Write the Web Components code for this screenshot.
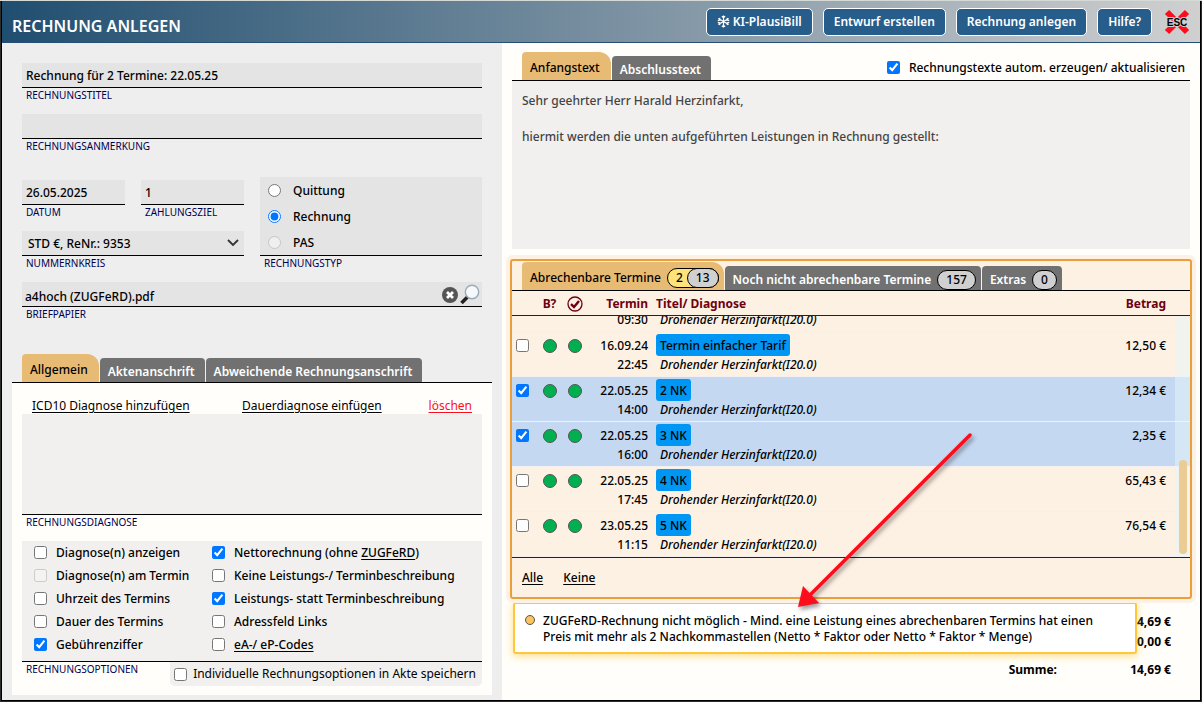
<!DOCTYPE html>
<html lang="de">
<head>
<meta charset="utf-8">
<title>Rechnung anlegen</title>
<style>
body { margin: 0; background: #2c2c2c; font: 500 12px/18px "Noto Sans", sans-serif; color: #000; }
</style>
</head>
<body>
<invoice-app></invoice-app>

<script>
const base = `<style>
  :host { display: block; box-sizing: border-box; }
  *, *::before, *::after { box-sizing: border-box; }
  button, input, select, textarea { font: inherit; color: inherit; margin: 0; }
  input[type=checkbox], input[type=radio] { width: 13px; height: 13px; flex: none; }
  a { color: inherit; text-underline-offset: 2px; }
</style>`;

function define(name, html, setup) {
  customElements.define(name, class extends HTMLElement {
    connectedCallback() {
      if (this.shadowRoot) return;
      this.attachShadow({ mode: 'open' }).innerHTML = base + (typeof html === 'function' ? html(this) : html);
      if (setup) setup(this, this.shadowRoot);
    }
  });
}

/* Button of the title bar */
define('bar-button', `<style>
  button { display: flex; align-items: center; gap: 3px; height: 28px; padding: 0 10px; border: 1px solid #fff; border-radius: 5px;
    background: #275d8b; color: #fff; font-size: 12px; font-weight: 600; white-space: nowrap; }
</style><button type="button"><slot></slot></button>`);

/* Title bar */
define('title-bar', `<style>
  :host { display: flex; align-items: center; gap: 10px; height: 42px; padding: 0 10px;
    border-bottom: 1px solid #264f77; background: linear-gradient(90deg, #204e70, #d0d0d0); }
  h1 { flex: 1; margin: 0; padding-top: 8px; font-size: 16px; line-height: 24px; font-weight: 600; color: #fff; }
  .esc { padding: 0; border: 0; background: none; width: 26px; height: 26px; margin-left: 2px; }
  svg { display: block; }
</style>
<h1>RECHNUNG ANLEGEN</h1>
<bar-button><svg width="13" height="13" viewBox="0 0 13 13" fill="none" stroke="#fff" stroke-width="1.2"><path d="M6.500 .5v12M1.300 3.500l10.400 6M11.700 3.500l-10.400 6M4.900 1.300l1.600 1.500 1.600-1.500M4.900 11.700l1.600-1.500 1.600 1.500M.8 5.600l2.200-.5L2.600 2.800M12.200 7.400l-2.200.5.4 2.300M12.200 5.600l-2.200-.5.4-2.300M.8 7.400l2.200.5-.4 2.300"/></svg>KI-PlausiBill</bar-button>
<bar-button>Entwurf erstellen</bar-button>
<bar-button>Rechnung anlegen</bar-button>
<bar-button>Hilfe?</bar-button>
<button class="esc" type="button" aria-label="Schließen">
  <svg width="26" height="26" viewBox="0 0 26 26"><path d="M3 3l20 20M23 3L3 23" stroke="#fb0d1b" stroke-width="6"/>
  <text x="13" y="17" text-anchor="middle" font-family="Liberation Sans" font-size="10" font-weight="700" stroke="#d0d0d0" stroke-width="2" paint-order="stroke">ESC</text></svg>
</button>`);

/* Control with an underline and a caption below it */
define('form-field', host => `<style>
  :host { padding-bottom: 12px; min-width: 0; }
  .box { min-height: 25px; border-bottom: 1px solid #000; background: #e4e4e4; display: flex; align-items: center; }
  input, select { flex: 1; min-width: 0; width: 100%; height: 24px; border: 0; background: none; padding: 0 4px; outline: 0; }
  select { appearance: none; padding: 2px 6px 0; }
  :host([low]) input { padding: 4px 4px 0 3px; }
  :host([low]) .box { padding-right: 1px; }
  .chev { flex: none; margin-right: 5px; pointer-events: none; }
  .caption { display: block; padding-left: 4px; font-size: 10px; line-height: 14px; font-weight: 400; color: #000050; }
</style>
<div class="box">${host.hasAttribute('select')
  ? `<select id="c"><option>${host.getAttribute('value')}</option></select><svg class="chev" width="12" height="12" viewBox="0 0 12 12" fill="none" stroke="#333" stroke-width="1.8"><path d="M1 3l5 5 5-5"/></svg>`
  : `<input id="c" type="text" value="${host.getAttribute('value') || ''}">`}<slot></slot></div>
<label class="caption" for="c">${host.getAttribute('caption')}</label>`);

/* Choice of the invoice type */
define('type-group', `<style>
  fieldset { margin: 0; padding: 0 0 12px; border: 0; min-width: 0; display: flex; flex-direction: column; }
  .box { background: #e4e4e4; border-bottom: 1px solid #000; }
  label { display: flex; align-items: center; gap: 12px; height: 26px; padding-left: 8px; line-height: 20px; }
  label span { padding-top: 2px; }
  .caption { padding-left: 4px; font-size: 10px; line-height: 14px; font-weight: 400; color: #000050; }
</style>
<fieldset aria-labelledby="cap"><div class="box">
  <label><input type="radio" name="t"><span>Quittung</span></label>
  <label><input type="radio" name="t" checked><span>Rechnung</span></label>
  <label><input type="radio" name="t" disabled><span>PAS</span></label>
</div><span class="caption" id="cap">RECHNUNGSTYP</span></fieldset>`);

/* Tick box with its label */
define('check-option', host => `<style>
  label { display: flex; align-items: center; gap: 9px; min-height: 23px; white-space: nowrap; }
</style><label><input type="checkbox" ${host.hasAttribute('checked') ? 'checked' : ''} ${host.hasAttribute('disabled') ? 'disabled' : ''}><span><slot></slot></span></label>`);

/* Tab strip and its tabs */
define('tab-strip', `<style>
  :host { display: flex; align-items: flex-end; gap: 1px; height: 28px; padding-left: 10px; }
</style><slot></slot>`);
define('tab-item', `<style>
  button { display: flex; align-items: center; gap: 5px; height: 24px; padding: 3px 10px 0 8px; border: 0; border-radius: 4px 4px 0 0;
    background: #717171; color: #fff; font-weight: 600; white-space: nowrap; }
  :host([active]) button { height: 28px; padding-right: 11px; border-radius: 4px 12px 0 0; background: #e7bb74; color: #000; font-weight: 500; }
  :host([counted]) button { padding-right: 5px; gap: 6px; }
</style><button type="button"><slot></slot></button>`);
define('count-pill', `<style>
  :host { display: flex; height: 20px; border: 1px solid #000; border-radius: 10px; background: #d0d0d0; color: #000; font-weight: 500; line-height: 18px; padding: 0 8px; }
  :host([marked]) { background: #ffe27a; padding: 0; }
  ::slotted(b) { font-weight: 500; padding: 0 5px 0 8px; }
  ::slotted(i) { font-style: normal; margin: -1px; padding: 0 8px; border: 1px solid #000; border-radius: 10px; background: #d0d0d0; }
</style><slot></slot>`);

/* Left column */
define('invoice-form', `<style>
  :host { background: #eee; padding: 20px 10px 5px; }
  .fields { padding: 0 10px; }
  .pair { display: grid; grid-template-columns: 1fr 1fr; gap: 0 16px; }
  .type { margin-top: 12px; }
  .stack { padding-top: 3px; }
  .icon { padding: 0; border: 0; background: none; display: block; flex: none; }
  .icon svg { display: block; }
  tab-strip { margin-top: 21px; }
  .panel { border-top: 1px solid #000; background: #fffefa; padding: 13px 10px 9px; }
  .links { display: flex; padding: 1px 10px 0; height: 18px; line-height: 18px; font-weight: 400; }
  .links a:nth-child(1) { width: 210px; }
  .links a:nth-child(3) { margin-left: auto; color: #fb0d1b; }
  textarea { display: block; width: 100%; height: 101px; resize: none; border: 0; border-bottom: 1px solid #000; background: #f1f0ee; }
  .caption { display: block; padding-left: 4px; font-size: 10px; line-height: 14px; font-weight: 400; color: #000050; }
  .options { display: grid; grid-template-columns: 178px 1fr; margin-top: 12px; padding: 0 0 5px 12px; border-bottom: 1px solid #000; background: #f1f0ee; }
  .foot { display: flex; justify-content: space-between; align-items: flex-start; }
  .save { display: flex; align-items: center; gap: 6px; height: 24px; padding: 0 6px 0 4px; border-radius: 0 0 5px 5px; background: #f1f0ee; font-weight: 400; }
</style>
<div class="fields">
  <form-field caption="RECHNUNGSTITEL" value="Rechnung für 2 Termine: 22.05.25"></form-field>
  <form-field caption="RECHNUNGSANMERKUNG"></form-field>
  <div class="pair type">
    <div class="stack">
      <div class="pair">
        <form-field caption="DATUM" value="26.05.2025"></form-field>
        <form-field caption="ZAHLUNGSZIEL" value="1"></form-field>
      </div>
      <form-field select caption="NUMMERNKREIS" value="STD €, ReNr.: 9353"></form-field>
    </div>
    <type-group></type-group>
  </div>
  <form-field low caption="BRIEFPAPIER" value="a4hoch (ZUGFeRD).pdf">
    <button class="icon" type="button" aria-label="Entfernen"><svg width="18" height="20" viewBox="0 0 18 20"><circle cx="9" cy="11" r="8" fill="#555"/><path d="M6 8l6 6M12 8l-6 6" stroke="#fff" stroke-width="2.8"/></svg></button>
    <button class="icon" type="button" aria-label="Suchen"><svg width="22" height="22" viewBox="0 0 22 22"><path d="M2.500 20l6-6" stroke="#222" stroke-width="3.600"/><path d="M8 14l2-2" stroke="#888" stroke-width="2"/><circle cx="13" cy="9" r="6.700" fill="#f6f9fb" stroke="#9aabba" stroke-width="1.400"/></svg></button>
  </form-field>
</div>
<tab-strip><tab-item active>Allgemein</tab-item><tab-item>Aktenanschrift</tab-item><tab-item>Abweichende Rechnungsanschrift</tab-item></tab-strip>
<div class="panel">
  <div class="links"><a href="#">ICD10 Diagnose hinzufügen</a><a href="#">Dauerdiagnose einfügen</a><a href="#">löschen</a></div>
  <textarea id="diag"></textarea>
  <label class="caption" for="diag">RECHNUNGSDIAGNOSE</label>
  <div class="options">
    <check-option>Diagnose(n) anzeigen</check-option>
    <check-option checked>Nettorechnung (ohne <a href="#">ZUGFeRD</a>)</check-option>
    <check-option disabled>Diagnose(n) am Termin</check-option>
    <check-option>Keine Leistungs-/ Terminbeschreibung</check-option>
    <check-option>Uhrzeit des Termins</check-option>
    <check-option checked>Leistungs- statt Terminbeschreibung</check-option>
    <check-option>Dauer des Termins</check-option>
    <check-option>Adressfeld Links</check-option>
    <check-option checked>Gebührenziffer</check-option>
    <check-option><a href="#">eA-/ eP-Codes</a></check-option>
  </div>
  <div class="foot">
    <span class="caption">RECHNUNGSOPTIONEN</span>
    <label class="save"><input type="checkbox">Individuelle Rechnungsoptionen in Akte speichern</label>
  </div>
</div>`);

/* Letter text with its tabs */
define('letter-text', `<style>
  .top { display: flex; justify-content: space-between; padding-right: 5px; }
  textarea { display: block; width: 100%; height: 169px; resize: none; border: 0; border-top: 1px solid #000; padding: 11px 10px; outline: 0;
    background: #f1f0ee; color: #444; line-height: 18px; }
  check-option { padding-top: 4px; }
</style>
<div class="top">
  <tab-strip><tab-item active>Anfangstext</tab-item><tab-item>Abschlusstext</tab-item></tab-strip>
  <check-option checked>Rechnungstexte autom. erzeugen/ aktualisieren</check-option>
</div>
<textarea aria-label="Anfangstext">Sehr geehrter Herr Harald Herzinfarkt,

hiermit werden die unten aufgeführten Leistungen in Rechnung gestellt:</textarea>`);

/* Red line-and-head pointer over the list */
define('hint-arrow', `<style>
  :host { position: absolute; z-index: 5; left: 281px; top: 167px; pointer-events: none; }
  svg { display: block; filter: drop-shadow(2px 3px 2px #0006); }
</style><svg width="184" height="186" viewBox="0 0 184 186"><path d="M177 7L18 166" stroke="#fb0d1b" stroke-width="3.500" stroke-linecap="round"/><path d="M5 179l5-21 16 17z" fill="#fb0d1b"/></svg>`);

const rows = [
  ['', '09:30', '', '', false],
  ['16.09.24', '22:45', 'Termin einfacher Tarif', '12,50 €', false],
  ['22.05.25', '14:00', '2 NK', '12,34 €', true],
  ['22.05.25', '16:00', '3 NK', '2,35 €', true],
  ['22.05.25', '17:45', '4 NK', '65,43 €', false],
  ['23.05.25', '11:15', '5 NK', '76,54 €', false],
];

/* Message over the totals */
define('alert-note', `<style>
  :host { position: absolute; left: 3px; top: 3px; width: 624px; min-height: 52px; padding: 9px 8px 7px 10px; display: flex; gap: 8px;
    border: 2px solid #ffc83c; border-radius: 3px; background: #fff; box-shadow: 0 2px 8px #ffc83c99; line-height: 16px; }
  i { flex: none; width: 10px; height: 10px; margin-top: 2px; border: 1px solid #555; border-radius: 50%; background: #fbc45f; }
  span { max-width: 572px; }
</style><i></i><span role="alert"><slot></slot></span>`);

/* Sums of the invoice */
define('sum-table', `<style>
  :host { position: relative; padding: 13px 21px 0 0; }
  table { margin-left: auto; border-spacing: 0; font-weight: 700; line-height: 20px; }
  th, td { padding: 0; text-align: right; font-weight: 700; }
  td { width: 114px; }
  .total > * { padding-top: 8px; }
</style>
<table>
  <tr><th></th><td>14,69 €</td></tr>
  <tr><th></th><td>0,00 €</td></tr>
  <tr class="total"><th>Summe:</th><td>14,69 €</td></tr>
</table>
<alert-note>ZUGFeRD-Rechnung nicht möglich - Mind. eine Leistung eines abrechenbaren Termins hat einen Preis mit mehr als 2 Nachkommastellen (Netto * Faktor oder Netto * Faktor * Menge)</alert-note>`);

/* Page frame and right column */
define('invoice-app', `<style>
  :host { min-height: 100vh; padding: 0 1px 1px; border-top: 1px solid #d6dad6; }
  main { min-height: calc(100vh - 2px); border: 1px solid #000; border-top: 0; display: grid; grid-template-rows: auto 1fr; grid-template-columns: minmax(0, 250fr) minmax(0, 349fr); }
  title-bar { grid-column: 1 / -1; }
  .right { background: #fffefa; padding: 9px 8px 0; }
  letter-text { margin: 0 2px 10px; }
</style>
<main>
  <title-bar></title-bar>
  <invoice-form></invoice-form>
  <div class="right">
    <letter-text></letter-text>
    <appointment-list></appointment-list>
    <sum-table></sum-table>
  </div>
</main>`);

/* Billable appointments */
define('appointment-list', `<style>
  :host { position: relative; z-index: 1; padding-top: 1px; border: 2px solid #e9a03c; border-radius: 3px; background: #fdf1e4; box-shadow: 0 0 0 4px #fdf1e4; }
  .view { position: relative; border-top: 1px solid #000; border-bottom: 1px solid #6e0012; }
  .scroll { height: 266px; overflow-y: auto; scrollbar-width: none; }
  table { width: 100%; table-layout: fixed; border-spacing: 0; }
  th { position: sticky; top: 0; z-index: 1; height: 25px; padding: 1px 0 0; background: #fdf1e4; border-bottom: 1px solid #6e0012; color: #6e0012; font-weight: 700; }
  th svg { display: block; margin: 0 auto; }
  td { height: 45px; padding: 2px 0 0; vertical-align: top; border-bottom: 1px solid #f4f0f2; line-height: 24px; white-space: nowrap; }
  tr.on td { background: #c5d8f1; }
  .date, .sum { text-align: right; }
  .title { text-align: left; padding-left: 8px; }
  .sum { padding-right: 24px; }
  .date span, .title em { display: block; line-height: 14px; }
  .title em { padding: 2px 0 0 4px; }
  .tag { display: block; width: fit-content; height: 22px; padding: 0 4px; border-radius: 3px; background: #0096f4; }
  .tag:empty { background: none; }
  .dot { display: block; width: 14px; height: 14px; margin: 5px auto 0; border: 1px solid #555; border-radius: 50%; background: #00b050; }
  td input { display: block; margin: 5px 0 0 4px; }
  .track { position: absolute; z-index: 2; top: 25px; right: 0; bottom: 0; width: 15px; background: #e6f6fa80; }
  .thumb { position: absolute; right: 3px; bottom: 3px; width: 8px; height: 94px; border-radius: 4px; background: #ebcc95; }
  .foot { display: flex; gap: 20px; height: 39px; align-items: center; padding-left: 10px; }
</style>
<tab-strip>
  <tab-item active counted>Abrechenbare Termine<count-pill marked><b>2</b><i>13</i></count-pill></tab-item>
  <tab-item counted>Noch nicht abrechenbare Termine<count-pill>157</count-pill></tab-item>
  <tab-item counted>Extras<count-pill>0</count-pill></tab-item>
</tab-strip>
<div class="view">
  <div class="scroll"><table>
    <colgroup><col style="width:25px"><col style="width:25px"><col style="width:25px"><col style="width:61px"><col><col style="width:100px"></colgroup>
    <thead><tr><th></th><th>B?</th><th><svg width="16" height="16" viewBox="0 0 16 16" fill="none" stroke="#6e0012"><circle cx="8" cy="8" r="7" stroke-width="1.300"/><path d="M4 8.200l3 2.800 5-6" stroke-width="2.400"/></svg></th><th class="date">Termin</th><th class="title">Titel/ Diagnose</th><th class="sum">Betrag</th></tr></thead>
    <tbody>${rows.map(([d, t, name, sum, on]) => `<tr class="${on ? 'on' : ''}">
      <td><input type="checkbox" aria-label="Termin ${t}" ${on ? 'checked' : ''}></td>
      <td><i class="dot"></i></td><td><i class="dot"></i></td>
      <td class="date">${d || '&nbsp;'}<span>${t}</span></td>
      <td class="title"><span class="tag">${name}</span><em>Drohender Herzinfarkt(I20.0)</em></td>
      <td class="sum">${sum}</td></tr>`).join('')}</tbody>
  </table></div>
  <div class="track"><div class="thumb"></div></div>
</div>
<div class="foot"><a href="#">Alle</a><a href="#">Keine</a></div>
<hint-arrow></hint-arrow>`, (host, root) => {
  const s = root.querySelector('.scroll');
  s.scrollTop = s.scrollHeight;
});
</script>
</body>
</html>
